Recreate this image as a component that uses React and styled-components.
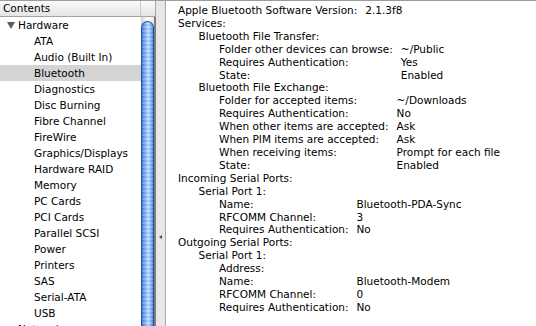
import React from 'react';
import styled, { createGlobalStyle } from 'styled-components';

const Global = createGlobalStyle`
  html, body { margin: 0; padding: 0; background: #fff; overflow: hidden; }
  body {
    font-family: "DejaVu Sans", "Noto Sans", sans-serif;
    font-size: 10.5px;
    color: #000;
  }
  * { box-sizing: border-box; }
`;

const Window = styled.div`
  display: flex;
  width: 536px;
  height: 326px;
  border-top: 1px solid #9c9c9c;
  overflow: hidden;
`;

const Sidebar = styled.div`
  display: flex;
  flex-direction: column;
  width: 156px;
  flex: none;
  min-height: 0;
`;

const HeaderRow = styled.div`
  display: flex;
  flex: none;
  height: 16px;
  border-bottom: 1px solid #a3a3a3;
  background: linear-gradient(#fbfbfb, #e4e4e4);
`;

const HeaderCell = styled.div`
  width: ${(p) => p.$w}px;
  flex: none;
  border-right: 1px solid ${(p) => p.$edge || '#c8c8c8'};
  padding-left: 3px;
  line-height: 15px;
  white-space: nowrap;
`;

const SideBody = styled.div`
  display: flex;
  flex: 1;
  min-height: 0;
`;

const List = styled.div`
  width: 141px;
  flex: none;
  display: flex;
  flex-direction: column;
  overflow: hidden;
`;

const Row = styled.div`
  flex: none;
  height: 16px;
  display: flex;
  align-items: center;
  padding-left: ${(p) => p.$indent}px;
  background: ${(p) => (p.$selected ? '#d4d4d4' : 'transparent')};
  white-space: nowrap;
`;

const Disclosure = styled.svg`
  width: 8px;
  height: 7px;
  margin-right: 3px;
  flex: none;
`;

const ScrollCol = styled.div`
  width: 15px;
  flex: none;
  display: flex;
  flex-direction: column;
  padding-top: 4px;
  border-right: 2px solid #7d7d7d;
  background: linear-gradient(90deg, #cfcfcf, #f2f2f2 30%, #ffffff 60%, #e6e6e6);
`;

const Thumb = styled.div`
  flex: 1;
  border-radius: 7px 7px 0 0;
  border: 1px solid #1f4cb2;
  border-bottom: none;
  background:
    repeating-linear-gradient(180deg, rgba(255, 255, 255, 0.16) 0 2px, rgba(0, 40, 140, 0.05) 2px 4px),
    linear-gradient(90deg, #3f78d8, #6aa2ee 20%, #a9d0fb 50%, #b9dcfd 62%, #7fb2f1 82%, #4f86dd);
`;

const Splitter = styled.div`
  width: 10px;
  flex: none;
  background: #e7e7e7;
  border-right: 1px solid #a9a9a9;
  display: flex;
  flex-direction: column;
  align-items: center;
`;

const Dimple = styled.svg`
  width: 4px;
  height: 4px;
  margin-top: 234px;
`;

const Content = styled.div`
  flex: 1;
  min-width: 0;
  padding: 3px 0 0 12px;
  line-height: 12.9px;
  white-space: nowrap;
  overflow: hidden;
`;

const Heading = styled.div``;

const Indent = styled.div`
  padding-left: 20.5px;
`;

const KV = styled.div`
  display: grid;
  grid-template-columns: max-content max-content;
  column-gap: 8px;
`;

const Cell = styled.div`
  min-height: 12.9px;
`;

const sidebar = [
  { label: 'Hardware', level: 0, open: true },
  'ATA',
  'Audio (Built In)',
  'Bluetooth',
  'Diagnostics',
  'Disc Burning',
  'Fibre Channel',
  'FireWire',
  'Graphics/Displays',
  'Hardware RAID',
  'Memory',
  'PC Cards',
  'PCI Cards',
  'Parallel SCSI',
  'Power',
  'Printers',
  'SAS',
  'Serial-ATA',
  'USB',
  { label: 'Network', level: 0, open: true },
];

const tree = [
  { label: 'Apple Bluetooth Software Version:', value: '2.1.3f8' },
  {
    label: 'Services:',
    children: [
      {
        label: 'Bluetooth File Transfer:',
        children: [
          { label: 'Folder other devices can browse:', value: '~/Public' },
          { label: 'Requires Authentication:', value: 'Yes' },
          { label: 'State:', value: 'Enabled' },
        ],
      },
      {
        label: 'Bluetooth File Exchange:',
        children: [
          { label: 'Folder for accepted items:', value: '~/Downloads' },
          { label: 'Requires Authentication:', value: 'No' },
          { label: 'When other items are accepted:', value: 'Ask' },
          { label: 'When PIM items are accepted:', value: 'Ask' },
          { label: 'When receiving items:', value: 'Prompt for each file' },
          { label: 'State:', value: 'Enabled' },
        ],
      },
    ],
  },
  {
    label: 'Incoming Serial Ports:',
    children: [
      {
        label: 'Serial Port 1:',
        children: [
          { label: 'Name:', value: 'Bluetooth-PDA-Sync' },
          { label: 'RFCOMM Channel:', value: '3' },
          { label: 'Requires Authentication:', value: 'No' },
        ],
      },
    ],
  },
  {
    label: 'Outgoing Serial Ports:',
    children: [
      {
        label: 'Serial Port 1:',
        children: [
          { label: 'Address:', value: '' },
          { label: 'Name:', value: 'Bluetooth-Modem' },
          { label: 'RFCOMM Channel:', value: '0' },
          { label: 'Requires Authentication:', value: 'No' },
        ],
      },
    ],
  },
];

function Nodes({ items }) {
  const out = [];
  let leaves = [];
  const flush = (k) => {
    if (leaves.length) {
      const group = leaves;
      out.push(
        <KV key={`kv-${k}`}>
          {group.map((l, i) => (
            <React.Fragment key={i}>
              <Cell>{l.label}</Cell>
              <Cell>{l.value}</Cell>
            </React.Fragment>
          ))}
        </KV>
      );
      leaves = [];
    }
  };
  items.forEach((it, i) => {
    if (it.children) {
      flush(i);
      out.push(
        <div key={i}>
          <Heading>{it.label}</Heading>
          <Indent>
            <Nodes items={it.children} />
          </Indent>
        </div>
      );
    } else {
      leaves.push(it);
    }
  });
  flush('end');
  return out;
}

export default function App() {
  return (
    <>
      <Global />
      <Window>
        <Sidebar>
          <HeaderRow>
            <HeaderCell $w={141}>Contents</HeaderCell>
            <HeaderCell $w={15} $edge="#a6a6a6" />
          </HeaderRow>
          <SideBody>
            <List>
              {sidebar.map((item, i) =>
                typeof item === 'string' ? (
                  <Row key={i} $indent={34} $selected={item === 'Bluetooth'}>
                    {item}
                  </Row>
                ) : (
                  <Row key={i} $indent={7}>
                    <Disclosure viewBox="0 0 8 7">
                      <path d="M0 0 L8 0 L4 7 Z" fill="#5b5b5b" />
                    </Disclosure>
                    {item.label}
                  </Row>
                )
              )}
            </List>
            <ScrollCol>
              <Thumb />
            </ScrollCol>
          </SideBody>
        </Sidebar>
        <Splitter>
          <Dimple viewBox="0 0 4 4">
            <path d="M3 0 L0 2 L3 4 Z" fill="#4a4a4a" />
          </Dimple>
        </Splitter>
        <Content>
          <Nodes items={tree} />
        </Content>
      </Window>
    </>
  );
}
